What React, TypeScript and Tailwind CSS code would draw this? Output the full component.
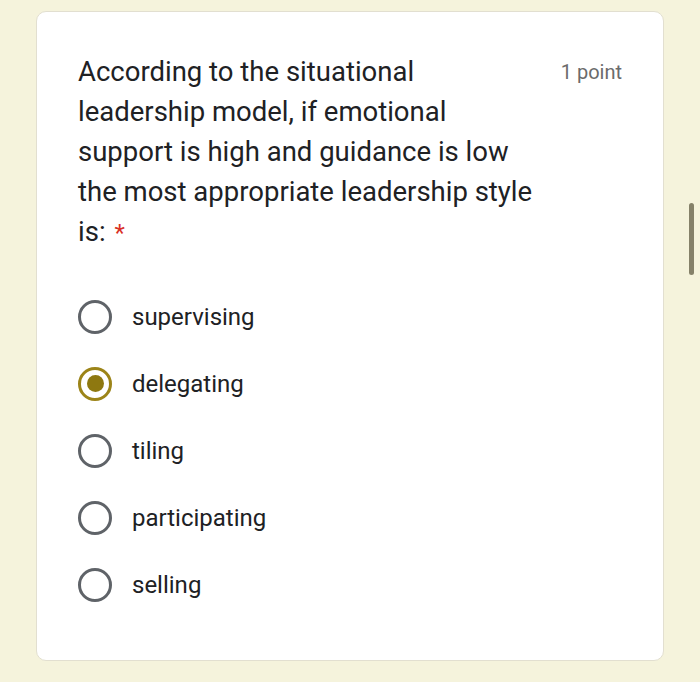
import React from "react";

const options = ["supervising", "delegating", "tiling", "participating", "selling"];

function Radio({ checked }: { checked: boolean }) {
  if (checked) {
    return (
      <div className="w-[34px] h-[34px] rounded-full border-[3px] border-[#9c8418] flex items-center justify-center shrink-0">
        <div className="w-[17px] h-[17px] rounded-full bg-[#8e7810]" />
      </div>
    );
  }
  return <div className="w-[34px] h-[34px] rounded-full border-[3px] border-[#5f6368] shrink-0" />;
}

const lines = [
  "According to the situational",
  "leadership model, if emotional",
  "support is high and guidance is low",
  "the most appropriate leadership style",
];

export default function App() {
  return (
    <div className="w-[700px] h-[682px] bg-[#f5f3dc] relative overflow-hidden" style={{ fontFamily: "Roboto, 'Liberation Sans', sans-serif" }}>
      <div className="pt-[11px] pl-[36px]">
        <div className="w-[628px] h-[650px] bg-white border border-[#e2dfd0] rounded-[10px] pt-[40px] pl-[41px] pr-[41px]">
          <div className="flex items-start justify-between">
            <div className="text-[27.5px] leading-[40px] text-[#202124] whitespace-nowrap">
              {lines.map((l) => (
                <div key={l}>{l}</div>
              ))}
              <div>
                is: <span className="text-[#d93025] text-[24px] ml-[2px]">*</span>
              </div>
            </div>
            <div className="text-[20px] leading-[40px] text-[#6b6b6b]">1 point</div>
          </div>
          <div className="mt-[30px] flex flex-col">
            {options.map((o, i) => (
              <div key={o} className="h-[67px] flex items-center gap-[20px]">
                <Radio checked={i === 1} />
                <span className="text-[24px] text-[#202124]">{o}</span>
              </div>
            ))}
          </div>
        </div>
      </div>
      <div className="absolute left-[689px] top-[203px] w-[5px] h-[72px] rounded-full bg-[#858169]" />
    </div>
  );
}
